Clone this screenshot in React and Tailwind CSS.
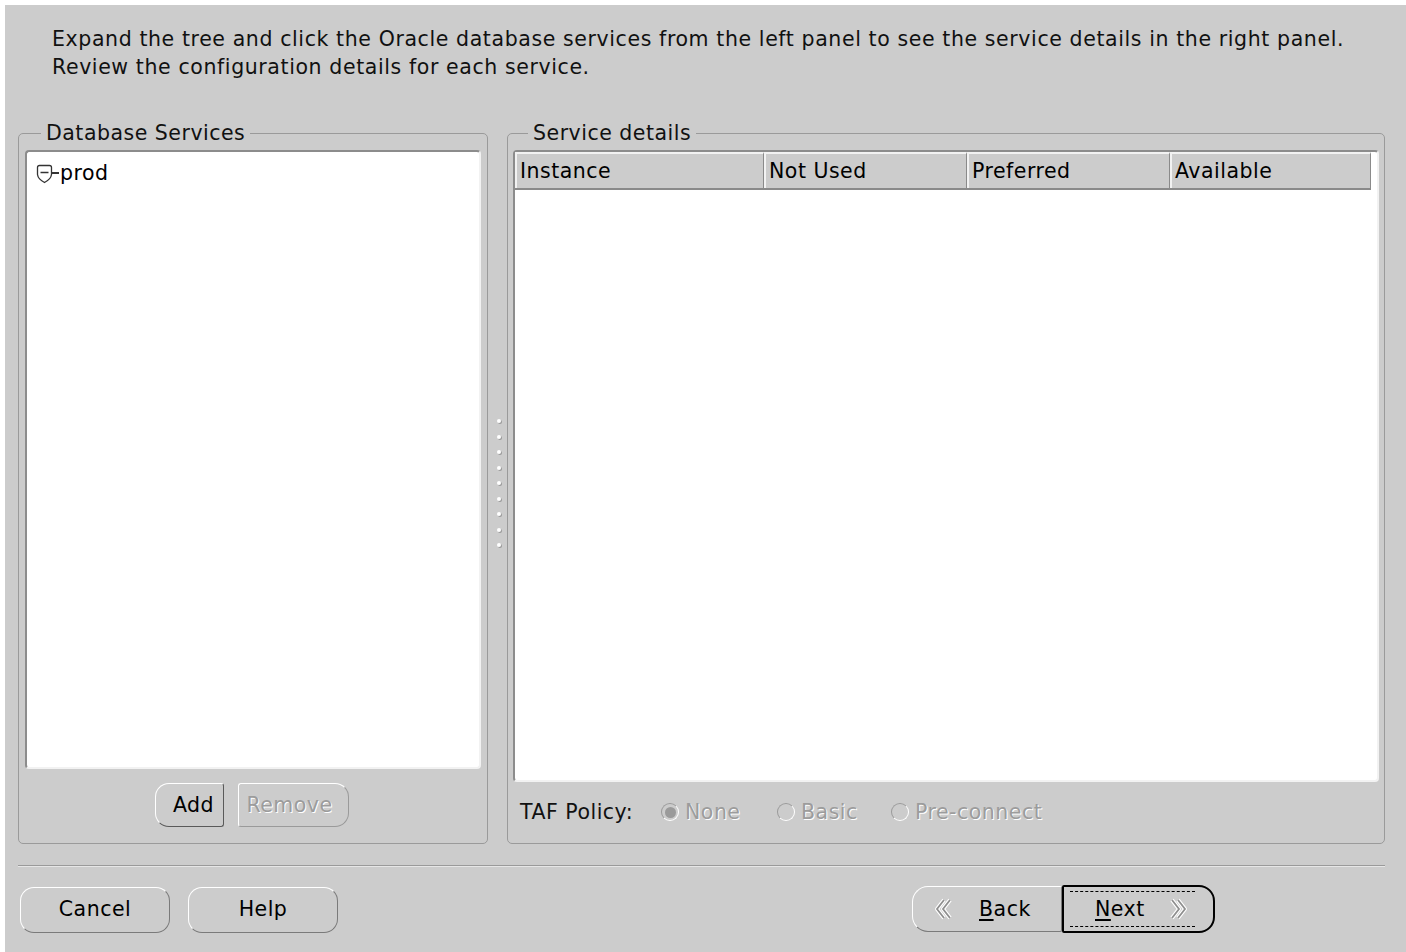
import React from "react";

const font = { fontFamily: '"DejaVu Sans", "Liberation Sans", sans-serif' };

function Chevrons({ dir }) {
  const flip = dir === "left" ? "" : "scale(-1,1) translate(-20,0)";
  return (
    <svg width="20" height="24" viewBox="0 0 20 24">
      <g transform={flip}>
        <path d="M11 3 L4 12 L11 21" fill="none" stroke="#ffffff" strokeWidth="4" strokeLinejoin="round" />
        <path d="M17 3 L10 12 L17 21" fill="none" stroke="#ffffff" strokeWidth="4" strokeLinejoin="round" />
        <path d="M11 3 L4 12 L11 21" fill="none" stroke="#8f8f8f" strokeWidth="1.8" />
        <path d="M17 3 L10 12 L17 21" fill="none" stroke="#8f8f8f" strokeWidth="1.8" />
      </g>
    </svg>
  );
}

function Radio({ label, checked }) {
  return (
    <div className="flex items-center gap-[6px]">
      <span className="w-[18px] h-[18px] rounded-full border-[1.5px] border-t-[#9a9a9a] border-l-[#9a9a9a] border-b-white border-r-white flex items-center justify-center">
        {checked && <span className="w-[11px] h-[11px] rounded-full bg-[#9a9a9a]" />}
      </span>
      <span className="text-[#9c9c9c] [text-shadow:1px_1px_0_#ffffff]">{label}</span>
    </div>
  );
}

function PillButton({ children, className = "" }) {
  return (
    <button
      className={
        "h-[46px] w-[150px] rounded-[14px] border-[1.5px] border-t-white border-l-white border-b-[#7a7a7a] border-r-[#7a7a7a] bg-[#cccccc] text-[20.5px] tracking-[0.5px] text-black flex items-center justify-center " +
        className
      }
      style={font}
    >
      {children}
    </button>
  );
}

function HeaderCell({ children, className = "" }) {
  return (
    <div
      className={
        "h-full flex items-center pl-[3px] border-t-2 border-l-2 border-t-[#f2f2f2] border-l-[#f2f2f2] border-r border-r-[#8a8a8a] " +
        className
      }
    >
      {children}
    </div>
  );
}

export default function App() {
  return (
    <div className="w-[1406px] h-[952px] bg-white pl-[5px] pt-[5px]" style={font}>
      <div className="w-full h-full bg-[#cccccc] text-black text-[20.5px] tracking-[0.5px]">
        <div className="pl-[47px] pt-[20px] leading-[28px] tracking-[0.6px] text-[#111]">
          <div>Expand the tree and click the Oracle database services from the left panel to see the service details in the right panel.</div>
          <div>Review the configuration details for each service.</div>
        </div>

        <div className="flex pl-[13px] mt-[41px] h-[722px]">
          {/* Left group */}
          <fieldset className="w-[470px] h-full border border-[#9a9a9a] rounded-[5px] m-0 p-0 flex flex-col min-w-0">
            <legend className="ml-[22px] px-[5px] leading-[22px] text-[#111]">Database Services</legend>
            <div className="flex flex-col flex-1 px-[6px] pt-[6px] pb-[16px]">
              <div className="flex-1 bg-white border-2 border-t-[#8c8c8c] border-l-[#8c8c8c] border-b-[#f2f2f2] border-r-[#f2f2f2] rounded-[4px] pt-[8px] pl-[9px]">
                <div className="flex items-center leading-[26px]">
                  <svg width="17" height="20" viewBox="0 0 17 20" className="mt-[1px]">
                    <path d="M1.5 3.5 Q1.5 1.5 3.5 1.5 L13.5 1.5 Q15.5 1.5 15.5 3.5 L15.5 10.5 Q15 15 8.5 18.5 Q2 15 1.5 10.5 Z" fill="none" stroke="#333" strokeWidth="1.3" />
                    <path d="M4.5 8.5 H12.5" stroke="#333" strokeWidth="1.5" />
                  </svg>
                  <span className="w-[7px] h-[1.5px] bg-[#333] -ml-[1px] mr-[1px]" />
                  <span>prod</span>
                </div>
              </div>
              <div className="flex gap-[14px] mt-[14px] pl-[130px]">
                <button className="h-[44px] w-[69px] rounded-l-[14px] rounded-r-[3px] border-[1.5px] border-t-white border-l-white border-b-[#5a5a5a] border-r-[#5a5a5a] text-black pl-[8px]" style={font}>
                  Add
                </button>
                <button className="h-[44px] w-[111px] rounded-r-[14px] rounded-l-[3px] border-[1.5px] border-t-white border-l-white border-b-[#9a9a9a] border-r-[#9a9a9a] text-[#9c9c9c] [text-shadow:1px_1px_0_#ffffff] pr-[8px]" style={font}>
                  Remove
                </button>
              </div>
            </div>
          </fieldset>

          {/* Splitter */}
          <div className="w-[19px] h-full flex flex-col items-center justify-center gap-[11.5px] pl-[2px]">
            {Array.from({ length: 9 }).map((_, i) => (
              <span key={i} className="w-[4px] h-[4px] rounded-full bg-white shadow-[1px_1px_0_#9a9a9a]" />
            ))}
          </div>

          {/* Right group */}
          <fieldset className="w-[878px] h-full border border-[#9a9a9a] rounded-[5px] m-0 p-0 flex flex-col min-w-0">
            <legend className="ml-[20px] px-[5px] leading-[22px] text-[#111]">Service details</legend>
            <div className="flex flex-col flex-1 px-[5px] pt-[6px]">
              <div className="h-[632px] bg-white border-2 border-t-[#8c8c8c] border-l-[#8c8c8c] border-b-[#f2f2f2] border-r-[#f2f2f2] rounded-[4px] flex flex-col">
                <div className="h-[38px] flex bg-[#cccccc] border-b-2 border-b-[#8a8a8a] mr-[6px]">
                  <HeaderCell className="w-[249px]">Instance</HeaderCell>
                  <HeaderCell className="w-[203px]">Not Used</HeaderCell>
                  <HeaderCell className="w-[203px]">Preferred</HeaderCell>
                  <HeaderCell className="flex-1">Available</HeaderCell>
                </div>
                <div className="flex-1" />
              </div>
              <div className="flex items-center h-[60px] pl-[7px]">
                <span className="w-[141px] text-[#111]">TAF Policy:</span>
                <div className="w-[116px]"><Radio label="None" checked /></div>
                <div className="w-[114px]"><Radio label="Basic" /></div>
                <Radio label="Pre-connect" />
              </div>
            </div>
          </fieldset>
        </div>

        <div className="ml-[13px] mt-[21px] w-[1367px] h-[2px] border-t border-t-[#9a9a9a] border-b border-b-[#e6e6e6]" />

        <div className="flex items-center mt-[19px] pl-[15px]">
          <PillButton>Cancel</PillButton>
          <PillButton className="ml-[18px]">Help</PillButton>
          <div className="flex ml-[574px]">
            <button className="h-[46px] w-[150px] rounded-l-[16px] rounded-r-[2px] border-[1.5px] border-t-white border-l-white border-b-[#7a7a7a] border-r-[#7a7a7a] text-black flex items-center pl-[20px]" style={font}>
              <Chevrons dir="left" />
              <span className="ml-[26px]"><span className="underline underline-offset-[3px]">B</span>ack</span>
            </button>
            <button className="h-[48px] w-[153px] -mt-[1px] rounded-r-[16px] rounded-l-[2px] border-2 border-black text-black flex items-center relative pl-[31px]" style={font}>
              <span className="absolute left-[6px] right-[18px] top-[4px] border-t border-dashed border-black" />
              <span className="absolute left-[6px] right-[18px] bottom-[4px] border-t border-dashed border-black" />
              <span><span className="underline underline-offset-[3px]">N</span>ext</span>
              <span className="ml-[24px]"><Chevrons dir="right" /></span>
            </button>
          </div>
        </div>
      </div>
    </div>
  );
}
